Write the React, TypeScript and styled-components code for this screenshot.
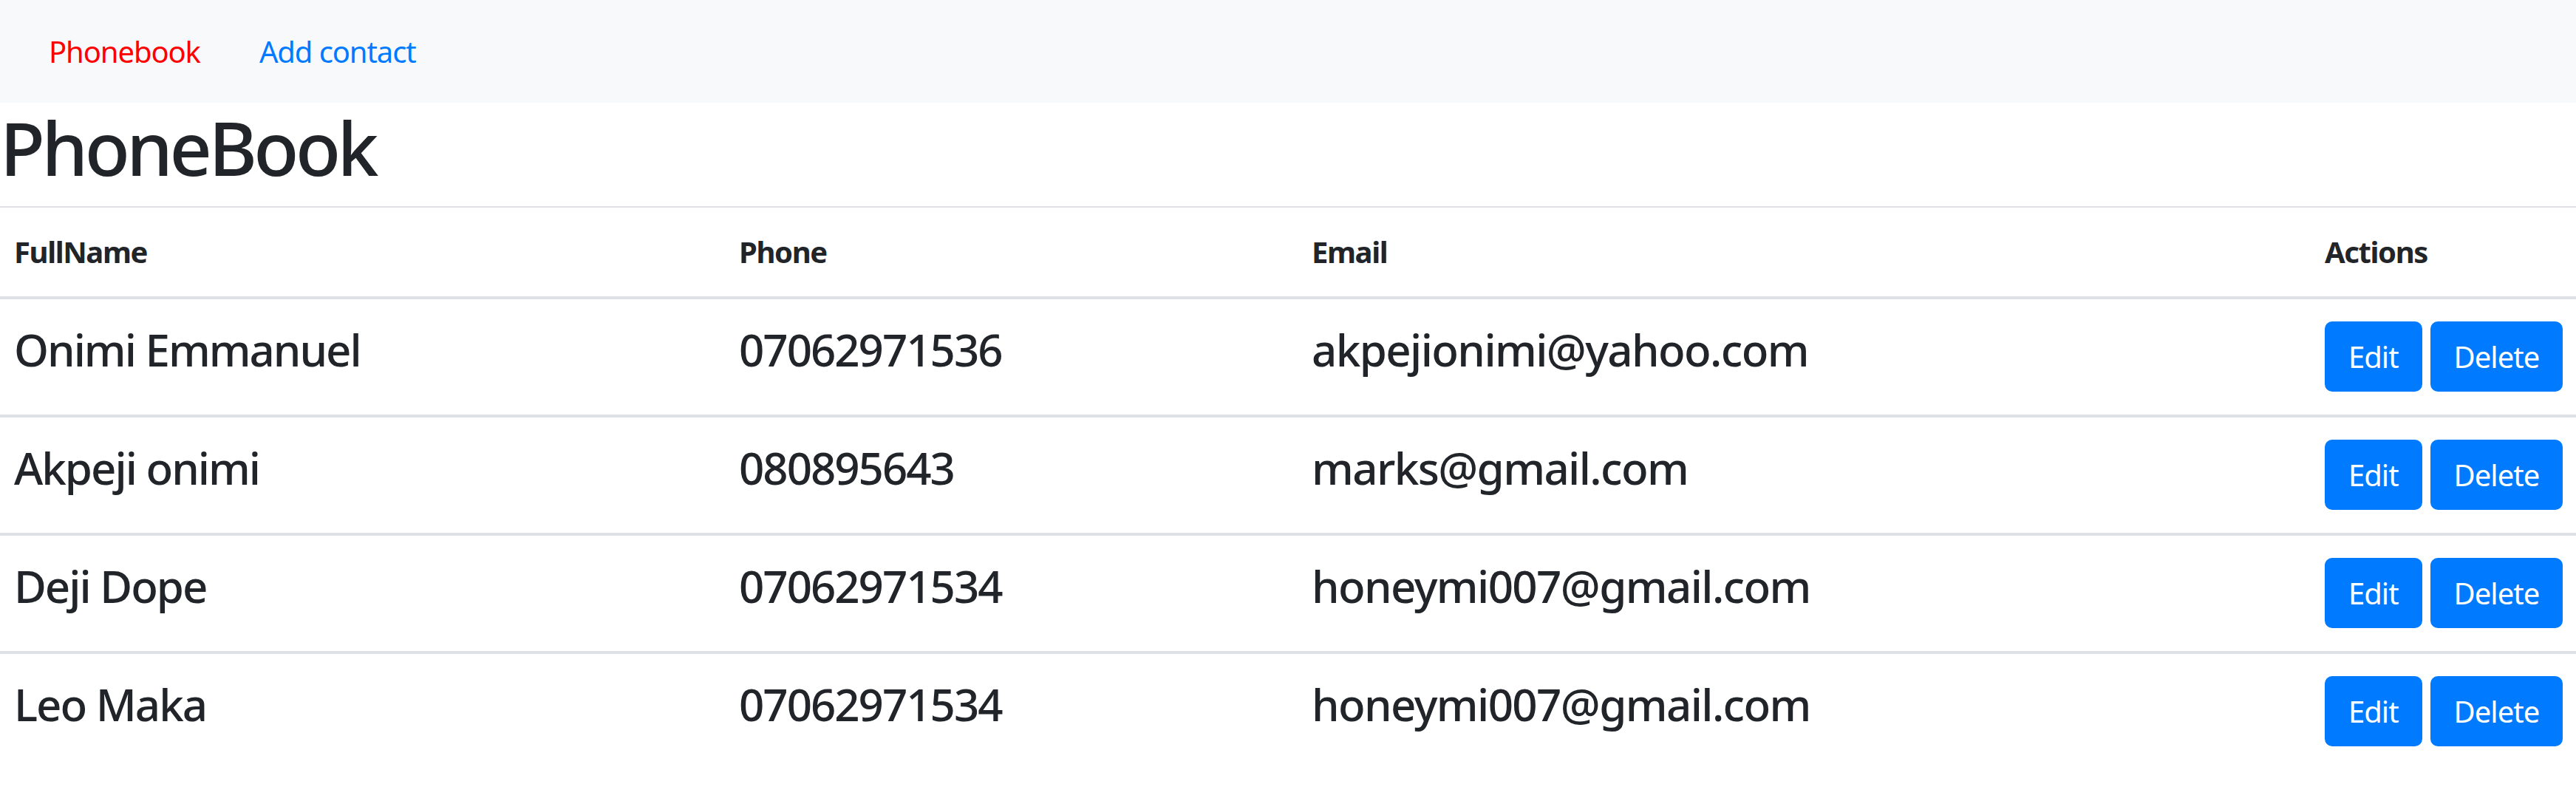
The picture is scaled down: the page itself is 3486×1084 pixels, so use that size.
import React from "react";
import styled, { createGlobalStyle } from "styled-components";

const GlobalStyle = createGlobalStyle`
  html, body { margin: 0; padding: 0; background: #ffffff; }
  body {
    font-family: "Noto Sans", "Open Sans", "Liberation Sans", sans-serif;
    color: #212529;
  }
  * { box-sizing: border-box; }
`;

const NavBar = styled.nav`
  height: 139px;
  background: #f8f9fa;
  display: flex;
  align-items: center;
  padding-left: 26px;
`;

const NavLink = styled.a<{ $active?: boolean }>`
  font-size: 40px;
  line-height: 60px;
  padding: 0 40px;
  letter-spacing: -1.1px;
  color: ${(p) => (p.$active ? "#ff0000" : "#007bff")};
  text-decoration: none;
  cursor: pointer;
`;

const Title = styled.h1`
  font-size: 100px;
  font-weight: 500;
  line-height: 120px;
  margin: 0 0 20px 0;
  letter-spacing: -4.5px;
`;

const Table = styled.table`
  width: 100%;
  border-collapse: collapse;
  table-layout: fixed;
  border-top: 2px solid #dee2e6;
`;

const HeadCell = styled.th`
  text-align: left;
  font-size: 40px;
  font-weight: 700;
  line-height: 60px;
  padding: 30px 19px;
  letter-spacing: -1.4px;
  border-bottom: 4px solid #dee2e6;
`;

const Row = styled.tr<{ $first?: boolean }>`
  border-top: ${(p) => (p.$first ? "none" : "4px solid #dee2e6")};
`;

const Cell = styled.td`
  vertical-align: top;
  padding: 30px 19px 31px;
`;

const CellText = styled.div<{ $tight?: boolean }>`
  font-size: 60px;
  font-weight: 500;
  line-height: 72px;
  padding-top: 2px;
  letter-spacing: ${(p) => (p.$tight ? "-2px" : "-1.6px")};
  white-space: nowrap;
`;

const ActionGroup = styled.div`
  display: flex;
  gap: 11px;
`;

const Button = styled.button`
  height: 95px;
  padding: 0 30px;
  font-family: inherit;
  font-size: 40px;
  line-height: 60px;
  letter-spacing: -1px;
  color: #ffffff;
  background: #007bff;
  border: 2px solid #007bff;
  border-radius: 10px;
  cursor: pointer;
`;

const contacts = [
  { name: "Onimi Emmanuel", phone: "07062971536", email: "akpejionimi@yahoo.com" },
  { name: "Akpeji onimi", phone: "080895643", email: "marks@gmail.com" },
  { name: "Deji Dope", phone: "07062971534", email: "honeymi007@gmail.com" },
  { name: "Leo Maka", phone: "07062971534", email: "honeymi007@gmail.com" },
];

export default function App() {
  return (
    <>
      <GlobalStyle />
      <NavBar>
        <NavLink $active>Phonebook</NavLink>
        <NavLink>Add contact</NavLink>
      </NavBar>
      <Title>PhoneBook</Title>
      <Table>
        <colgroup>
          <col style={{ width: 981 }} />
          <col style={{ width: 775 }} />
          <col style={{ width: 1371 }} />
          <col style={{ width: 359 }} />
        </colgroup>
        <thead>
          <tr>
            <HeadCell>FullName</HeadCell>
            <HeadCell>Phone</HeadCell>
            <HeadCell>Email</HeadCell>
            <HeadCell>Actions</HeadCell>
          </tr>
        </thead>
        <tbody>
          {contacts.map((c, i) => (
            <Row key={i} $first={i === 0}>
              <Cell>
                <CellText $tight>{c.name}</CellText>
              </Cell>
              <Cell>
                <CellText $tight>{c.phone}</CellText>
              </Cell>
              <Cell>
                <CellText>{c.email}</CellText>
              </Cell>
              <Cell>
                <ActionGroup>
                  <Button>Edit</Button>
                  <Button>Delete</Button>
                </ActionGroup>
              </Cell>
            </Row>
          ))}
        </tbody>
      </Table>
    </>
  );
}
